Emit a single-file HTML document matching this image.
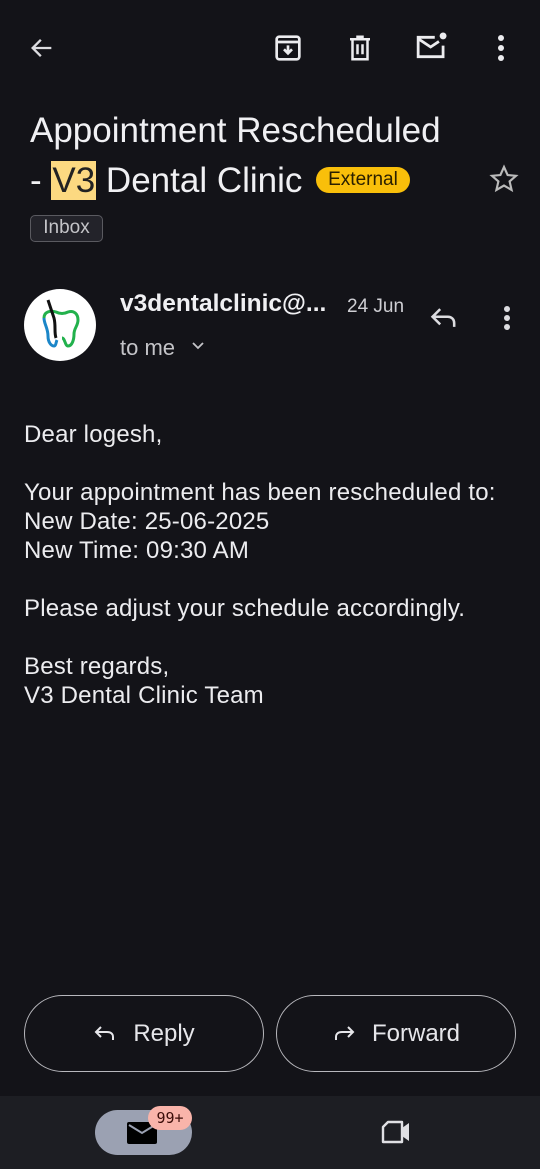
<!DOCTYPE html>
<html><head><meta charset="utf-8"><style>
*{margin:0;padding:0;box-sizing:border-box}
body{width:540px;height:1169px;background:#131318;color:#e6e6ea;font-family:"Liberation Sans",sans-serif;position:relative;overflow:hidden}
.a{position:absolute}
svg{position:absolute}
.title{left:30px;top:106px;font-size:35px;line-height:50px;color:#f0f0f3;letter-spacing:0;white-space:nowrap}
.hl{background:#fcd981;color:#222;padding:0 1px}
.ext{display:inline-block;background:#f9bf0a;color:#2a2000;font-size:19px;line-height:26px;height:26px;padding:0 12px;border-radius:13px;vertical-align:7px;margin-left:4px;letter-spacing:0}
.body{left:24px;top:420px;font-size:24px;line-height:29px;color:#ececef;letter-spacing:0.2px}
.btn{position:absolute;top:995px;height:77px;border:1.5px solid #b8b8bd;border-radius:39px;font-size:24px;color:#e6e6ea;display:flex;align-items:center;justify-content:center}
</style></head><body>
<svg style="left:28px;top:34px" width="28" height="28" viewBox="0 0 24 24"><path d="M20 12H5M11 5l-7 7 7 7" fill="none" stroke="#dcdce0" stroke-width="2"/></svg>
<svg style="left:272px;top:32px" width="32" height="32" viewBox="0 0 24 24" fill="none" stroke="#ececef" stroke-width="2"><rect x="3.5" y="3.5" width="17" height="17" rx="2"/><path d="M3.5 7.5h17M12 10v6M9 13l3 3 3-3"/></svg>
<svg style="left:345px;top:32px" width="30" height="32" viewBox="0 0 24 24" fill="none" stroke="#ececef" stroke-width="2"><path d="M4 5h16M9 3h6M6 5v16h12V5M10 9v8M14 9v8"/></svg>
<svg style="left:414px;top:30px" width="36" height="34" viewBox="0 0 26 24" fill="none" stroke="#ececef" stroke-width="2"><path d="M15 5H3v14h18v-8M3 6l9 6 6-4"/><circle cx="21" cy="4" r="2.5" fill="#ececef" stroke="none"/></svg>
<svg style="left:490px;top:32px" width="22" height="32" viewBox="0 0 22 32"><circle cx="11" cy="6" r="3" fill="#ececef"/><circle cx="11" cy="16" r="3" fill="#ececef"/><circle cx="11" cy="26" r="3" fill="#ececef"/></svg>
<div class="a title">Appointment Rescheduled<br>- <span class="hl">V3</span> Dental Clinic <span class="ext">External</span></div>
<svg style="left:488px;top:163px" width="32" height="32" viewBox="0 0 24 24"><path d="M12 3l2.7 6 6.3.6-4.8 4.2 1.5 6.4L12 16.9 6.3 20.2l1.5-6.4L3 9.6 9.3 9z" fill="none" stroke="#bbb" stroke-width="1.6"/></svg>
<div class="a" style="left:30px;top:215px;width:73px;height:27px;border:1.5px solid #5a5a60;border-radius:5px;background:#23232a;color:#c4c4c8;font-size:19px;line-height:24px;text-align:center">Inbox</div>
<div class="a" style="left:24px;top:289px;width:72px;height:72px;border-radius:50%;background:#fff"></div>
<svg style="left:38px;top:296px" width="44" height="56" viewBox="0 0 44 56" fill="none" stroke-width="3"><path d="M6 22c0-6 6-8 12-6 4 2 8 2 12 0 6-2 10 2 10 8 0 6-4 8-4 14 0 6-2 12-6 12-3 0-3-8-6-8" stroke="#22b14c"/><path d="M6 22c0 6 4 10 4 18 0 6 3 10 6 10 2 0 2-4 3-6" stroke="#1b86c8"/><path d="M10 4l6 18c2 8 0 14 2 20" stroke="#111"/></svg>
<div class="a" style="left:120px;top:290px;font-size:24.5px;font-weight:bold;color:#f0f0f3">v3dentalclinic@...</div>
<div class="a" style="left:347px;top:296px;font-size:19px;color:#cfcfd4">24 Jun</div>
<div class="a" style="left:120px;top:335px;font-size:22px;color:#c4c4c8">to me</div>
<svg style="left:190px;top:339px" width="16" height="14" viewBox="0 0 16 14"><path d="M3 4l5 5 5-5" fill="none" stroke="#c4c4c8" stroke-width="1.8"/></svg>
<svg style="left:428px;top:304px" width="32" height="28" viewBox="0 0 24 22"><path d="M9 4L3 10l6 6M3 10h12c3 0 5 2 5 5v3" fill="none" stroke="#dcdce0" stroke-width="2"/></svg>
<svg style="left:498px;top:304px" width="18" height="28" viewBox="0 0 18 28"><circle cx="9" cy="5" r="3" fill="#dcdce0"/><circle cx="9" cy="14" r="3" fill="#dcdce0"/><circle cx="9" cy="23" r="3" fill="#dcdce0"/></svg>
<div class="a body">Dear logesh,<br><br>Your appointment has been rescheduled to:<br>New Date: 25-06-2025<br>New Time: 09:30 AM<br><br>Please adjust your schedule accordingly.<br><br>Best regards,<br>V3 Dental Clinic Team</div>
<div class="btn" style="left:24px;width:240px"><svg style="position:static;margin-right:16px" width="24" height="20" viewBox="0 0 24 20"><path d="M8 3L3 8l5 5M3 8h11c4 0 6 2 6 5v3" fill="none" stroke="#e6e6ea" stroke-width="2"/></svg>Reply</div>
<div class="btn" style="left:276px;width:240px"><svg style="position:static;margin-right:16px" width="24" height="20" viewBox="0 0 24 20"><path d="M16 3l5 5-5 5M21 8H10c-4 0-6 2-6 5v3" fill="none" stroke="#e6e6ea" stroke-width="2"/></svg>Forward</div>
<div class="a" style="left:0;top:1096px;width:540px;height:73px;background:#1d1e23"></div>
<div class="a" style="left:95px;top:1110px;width:97px;height:45px;border-radius:23px;background:#9ba1b2"></div>
<svg style="left:124px;top:1119px" width="36" height="28" viewBox="0 0 36 28"><rect x="3" y="3" width="30" height="22" rx="2" fill="#000"/><path d="M5 6l13 8 13-8" fill="none" stroke="#9ba1b2" stroke-width="2"/></svg>
<div class="a" style="left:148px;top:1106px;width:44px;height:24px;border-radius:12px;background:#f9b4aa;color:#3a0c08;font-family:'DejaVu Sans Mono',monospace;font-size:15px;line-height:24px;text-align:center">99+</div>
<svg style="left:380px;top:1118px" width="34" height="28" viewBox="0 0 34 28"><path d="M8 4h14v20H3V9z" fill="none" stroke="#e0e0e4" stroke-width="2.4" stroke-linejoin="round"/><path d="M22 10l7-5v18l-7-5z" fill="#e0e0e4"/></svg>
</body></html>
